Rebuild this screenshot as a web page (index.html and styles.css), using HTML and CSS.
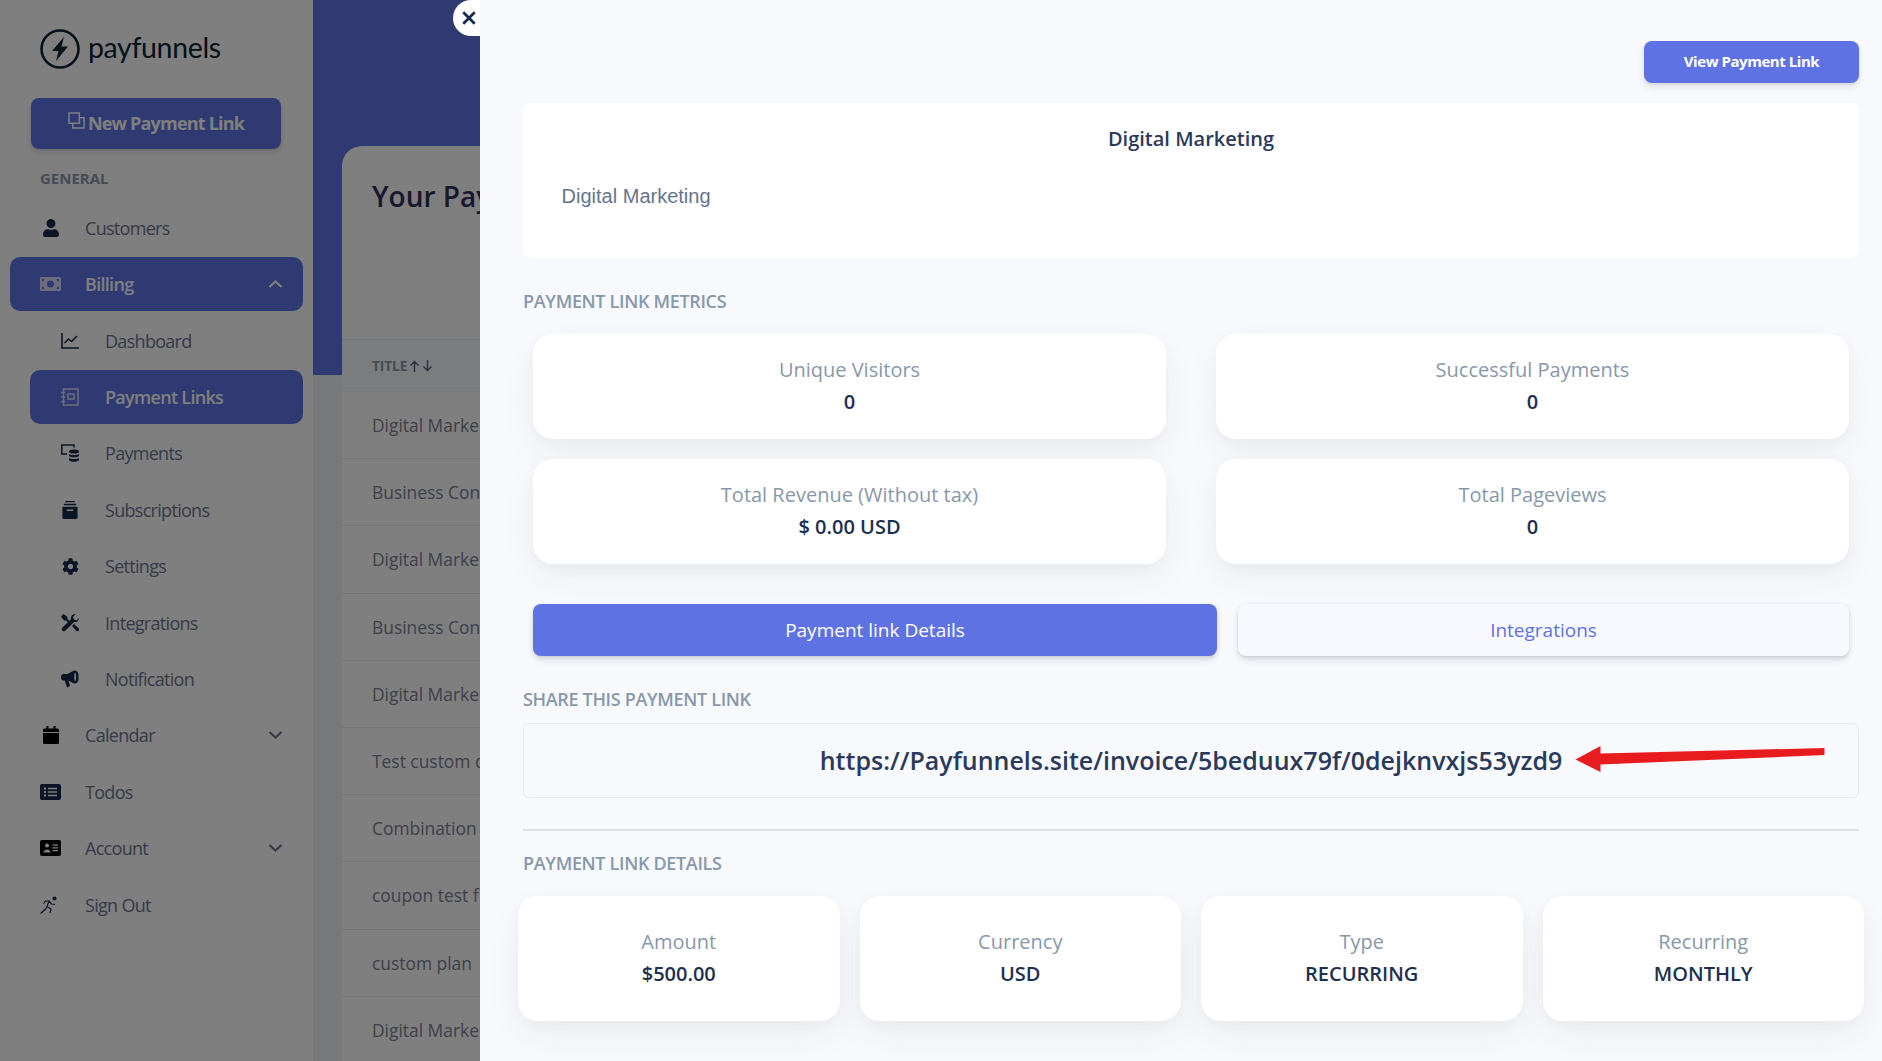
FILE: index.html
```html
<!DOCTYPE html>
<html lang="en">
<head>
<meta charset="utf-8">
<title>Payment Links</title>
<link rel="stylesheet" href="styles.css">
</head>
<body>
<div class="app">
  <aside class="sidebar">
    <div class="logo">
      <svg class="logo-mark" viewBox="0 0 40 40"><circle cx="20" cy="20" r="18.5" fill="none" stroke="#0b2233" stroke-width="2.6"/><path d="M24 8 L12 22 H18.5 L16 32 L28 17.5 H21.5 Z" fill="#0b2233"/></svg>
      <span class="logo-text">payfunnels</span>
    </div>
    <button class="new-btn"><svg class="new-icon" viewBox="0 0 18 18"><path d="M1 1h11v11H1zM5 12v5h12V6h-5" fill="none" stroke="currentColor" stroke-width="1.6"/></svg><span>New Payment Link</span></button>
    <div class="side-heading">GENERAL</div>
    <nav class="nav">
      <a class="item"><span class="ico"><svg class="i16" viewBox="0 0 448 512"><path d="M224 256c70.7 0 128-57.3 128-128S294.7 0 224 0 96 57.3 96 128s57.3 128 128 128zm89.6 32h-16.7c-22.2 10.2-46.9 16-72.9 16s-50.6-5.8-72.9-16h-16.7C60.2 288 0 348.2 0 422.4V464c0 26.5 21.5 48 48 48h352c26.5 0 48-21.5 48-48v-41.6c0-74.2-60.2-134.4-134.4-134.4z"/></svg></span>Customers</a>
      <a class="item active"><span class="ico"><svg class="i21" viewBox="0 0 21 14"><path fill-rule="evenodd" d="M1.5 0h18A1.5 1.5 0 0 1 21 1.500v11a1.500 1.500 0 0 1-1.500 1.500h-18A1.500 1.500 0 0 1 0 12.500v-11A1.500 1.500 0 0 1 1.500 0zM10.500 3.500a3.500 3.500 0 1 0 0 7 3.500 3.500 0 0 0 0-7zM2 2v2.500A2.500 2.500 0 0 0 4.500 2zM19 2h-2.500A2.500 2.500 0 0 0 19 4.500zM2 12h2.500A2.500 2.500 0 0 0 2 9.500zM19 12V9.500A2.500 2.500 0 0 0 16.500 12z"/></svg></span>Billing<svg class="chev" viewBox="0 0 14 8"><path d="M1 7l6-5.500L13 7" fill="none" stroke="currentColor" stroke-width="2.200"/></svg></a>
      <a class="item sub"><span class="ico"><svg class="i18" viewBox="0 0 18 16"><path d="M1 0v15h17" fill="none" stroke="currentColor" stroke-width="1.600"/><path d="M3.500 10l4-4 3 2.500L16 3" fill="none" stroke="currentColor" stroke-width="1.600"/></svg></span>Dashboard</a>
      <a class="item sub active"><span class="ico"><svg class="i18" viewBox="0 0 18 18"><path d="M2.500 1h14.500v16H2.500z" fill="none" stroke="currentColor" stroke-width="1.500"/><path d="M7 6h6v5H7z" fill="none" stroke="currentColor" stroke-width="1.500"/><path d="M0 4.500h4M0 9h4M0 13.500h4" stroke="currentColor" stroke-width="1.500"/></svg></span>Payment Links</a>
      <a class="item sub"><span class="ico"><svg class="i18" viewBox="0 0 18 18"><path d="M6 10H.8V1H13v2.500" fill="none" stroke="currentColor" stroke-width="1.500"/><ellipse cx="13" cy="7.500" rx="5" ry="2"/><path d="M8 10c1 1.300 9 1.300 10 0v2c-1 1.800-9 1.800-10 0zM8 14c1 1.300 9 1.300 10 0v2c-1 2.400-9 2.400-10 0z"/></svg></span>Payments</a>
      <a class="item sub"><span class="ico"><svg class="i18" viewBox="0 0 16 19"><path fill-rule="evenodd" d="M3 0h10v1.300H3zM1.500 3h13v1.500h-13zM0 6h16v11.500a1.500 1.500 0 0 1-1.500 1.500h-13A1.500 1.500 0 0 1 0 17.500zM4.500 9v1.500h7V9z"/></svg></span>Subscriptions</a>
      <a class="item sub"><span class="ico"><svg class="cog" viewBox="0 0 512 512"><path d="M487.400 315.700l-42.600-24.600c4.300-23.200 4.300-47 0-70.200l42.600-24.600c4.900-2.800 7.100-8.600 5.500-14-11.100-35.600-30-67.800-54.700-94.600-3.800-4.100-10-5.100-14.800-2.300L380.800 110c-17.900-15.400-38.500-27.300-60.800-35.100V25.800c0-5.600-3.900-10.500-9.400-11.700-36.700-8.200-74.300-7.800-109.200 0-5.500 1.200-9.400 6.100-9.400 11.700V75c-22.200 7.900-42.800 19.800-60.800 35.100L88.700 85.500c-4.900-2.800-11-1.900-14.800 2.300-24.700 26.700-43.600 58.900-54.700 94.600-1.700 5.400.6 11.200 5.500 14L67.300 221c-4.300 23.200-4.300 47 0 70.200l-42.600 24.600c-4.900 2.800-7.100 8.600-5.500 14 11.100 35.600 30 67.800 54.700 94.600 3.800 4.100 10 5.100 14.800 2.300l42.600-24.600c17.900 15.400 38.500 27.300 60.800 35.100v49.200c0 5.600 3.900 10.500 9.400 11.700 36.700 8.200 74.300 7.800 109.200 0 5.500-1.200 9.400-6.100 9.400-11.700v-49.200c22.200-7.900 42.800-19.800 60.800-35.100l42.600 24.600c4.900 2.800 11 1.900 14.800-2.300 24.700-26.700 43.600-58.900 54.700-94.600 1.500-5.500-.7-11.300-5.600-14.100zM256 336c-44.100 0-80-35.900-80-80s35.900-80 80-80 80 35.900 80 80-35.900 80-80 80z"/></svg></span>Settings</a>
      <a class="item sub"><span class="ico"><svg class="i18" viewBox="0 0 18 18"><path d="M2.500 0L0 2.500l3 4h2l3 3 1.500-1.500-3-3v-2zM14 0a4 4 0 0 0-3.900 5L1 14a2.200 2.200 0 0 0 3 3l9-9.100A4 4 0 0 0 18 4l-2.500 2.400L13 5.500 12 3l2.500-2.700zM11 12l4.500 5a1.800 1.800 0 0 0 2.400-2.400L13 10z"/></svg></span>Integrations</a>
      <a class="item sub"><span class="ico"><svg class="i18" viewBox="0 0 18 17"><path fill-rule="evenodd" d="M0 6.500a3 3 0 0 1 3-3h3.500L13 0c1.500 0 3 .5 3.500 1.500C18 3 18 10 16.500 11.500c-.5 1-2 1.500-3.500 1.500L7.500 10l1.500 5.500-3 1.500-2.300-7A3 3 0 0 1 0 6.500zM14 2c-1 2-1 7 0 9 1.500-1 1.500-8 0-9z"/></svg></span>Notification</a>
      <a class="item"><span class="ico"><svg class="i16 black" viewBox="0 0 16 18"><path d="M0 7h16v9.500a1.500 1.500 0 0 1-1.500 1.500h-13A1.500 1.500 0 0 1 0 16.500zM1.500 2.500H3.500V0h2v2.500h5V0h2v2.500h2A1.500 1.500 0 0 1 16 4v2H0V4a1.500 1.500 0 0 1 1.500-1.500z"/></svg></span>Calendar<svg class="chev" viewBox="0 0 14 8"><path d="M1 1l6 5.500L13 1" fill="none" stroke="currentColor" stroke-width="2.200"/></svg></a>
      <a class="item"><span class="ico"><svg class="i21" viewBox="0 0 21 16"><path fill-rule="evenodd" d="M2 0h17a2 2 0 0 1 2 2v12a2 2 0 0 1-2 2H2a2 2 0 0 1-2-2V2a2 2 0 0 1 2-2zM4 3.500v2h2v-2zM4 7v2h2V7zM4 10.500v2h2v-2zM8 3.800v1.500h9V3.800zM8 7.300v1.500h9V7.300zM8 10.800v1.500h9v-1.500z"/></svg></span>Todos</a>
      <a class="item"><span class="ico"><svg class="i21 black" viewBox="0 0 21 16"><path fill-rule="evenodd" d="M2 0h17a2 2 0 0 1 2 2v12a2 2 0 0 1-2 2H2a2 2 0 0 1-2-2V2a2 2 0 0 1 2-2zM7 3.500a2 2 0 1 0 0 4 2 2 0 0 0 0-4zM3.500 12.500h7c0-4-7-4-7 0zM12.500 4.500v1.200H18V4.500zM12.500 7.300v1.200H18V7.300zM12.500 10v1.200H18V10z"/></svg></span>Account<svg class="chev" viewBox="0 0 14 8"><path d="M1 1l6 5.500L13 1" fill="none" stroke="currentColor" stroke-width="2.200"/></svg></a>
      <a class="item"><span class="ico"><svg class="i18" viewBox="0 0 18 18"><circle cx="14.500" cy="2.500" r="2"/><path d="M.5 17.500l5-4.500 1.500-2.500L11 13l-1 4M7 10.500l2-5.500H5.500L3.500 7.500M9 5l2.500 3 3.500.5" fill="none" stroke="currentColor" stroke-width="1.200"/></svg></span>Sign Out</a>
    </nav>
  </aside>
  <main class="main">
    <div class="hero"></div>
    <section class="list-card">
      <h2 class="list-title">Your Pay</h2>
      <div class="list-head"><span class="th">TITLE</span><svg class="sort" viewBox="0 0 24 12"><path d="M5.500 12V1.500M1.500 5.500l4-4 4 4M18.500 0v10.500M14.500 6.500l4 4 4-4" fill="none" stroke="currentColor" stroke-width="1.400"/></svg></div>
      <div class="row">Digital Marke</div>
      <div class="row">Business Con</div>
      <div class="row">Digital Marke</div>
      <div class="row">Business Con</div>
      <div class="row">Digital Marke</div>
      <div class="row">Test custom d</div>
      <div class="row">Combination</div>
      <div class="row">coupon test f</div>
      <div class="row">custom plan</div>
      <div class="row">Digital Marke</div>
    </section>
  </main>
</div>
<div class="overlay"></div>
<section class="panel">
  <button class="close"><svg viewBox="0 0 14 14"><path d="M2 2l10 10M12 2L2 12" stroke="#172b4d" stroke-width="2.400" fill="none"/></svg></button>
  <div class="panel-top"><a class="view-btn">View Payment Link</a></div>
  <div class="intro">
    <h3 class="intro-title">Digital Marketing</h3>
    <p class="intro-text">Digital Marketing</p>
  </div>
  <h6 class="section first">PAYMENT LINK METRICS</h6>
  <div class="metrics">
    <div class="stat"><span class="stat-label">Unique Visitors</span><strong class="stat-value">0</strong></div>
    <div class="stat"><span class="stat-label">Successful Payments</span><strong class="stat-value">0</strong></div>
    <div class="stat"><span class="stat-label">Total Revenue (Without tax)</span><strong class="stat-value">$ 0.00 USD</strong></div>
    <div class="stat"><span class="stat-label">Total Pageviews</span><strong class="stat-value">0</strong></div>
  </div>
  <div class="tabs">
    <a class="tab on">Payment link Details</a>
    <a class="tab off">Integrations</a>
  </div>
  <h6 class="section share">SHARE THIS PAYMENT LINK</h6>
  <div class="link-box">
    <span class="link-url">https://Payfunnels.site/invoice/5beduux79f/0dejknvxjs53yzd9</span>
    <svg class="arrow" viewBox="0 0 250 26"><path d="M0 13.500L25 0V7.500L249 2V9L25 18.500V26Z" fill="#e81c1f"/></svg>
  </div>
  <hr class="rule">
  <h6 class="section details">PAYMENT LINK DETAILS</h6>
  <div class="detail-grid">
    <div class="stat tall"><span class="stat-label">Amount</span><strong class="stat-value">$500.00</strong></div>
    <div class="stat tall"><span class="stat-label">Currency</span><strong class="stat-value">USD</strong></div>
    <div class="stat tall"><span class="stat-label">Type</span><strong class="stat-value">RECURRING</strong></div>
    <div class="stat tall"><span class="stat-label">Recurring</span><strong class="stat-value">MONTHLY</strong></div>
  </div>
</section>
</body>
</html>
```

FILE: styles.css
```css
* { box-sizing: border-box; }
html, body { margin: 0; height: 100%; overflow: hidden; }
body { font-family: "Open Sans", "Liberation Sans", sans-serif; color: #525f7f; background: #f4f5f7; }
h2, h3, h6, p { margin: 0; }
svg { display: block; fill: currentColor; }

.app { display: flex; height: 1061px; }

.sidebar { width: 313px; flex: none; background: #fff; padding: 0 10px; }
.logo { display: flex; align-items: center; gap: 8px; height: 98px; padding: 0 0 0 30px; }
.logo-mark { width: 40px; height: 40px; }
.logo-text { font-family: "Lato", sans-serif; font-size: 28.500px; color: #0b2233; letter-spacing: -.35px; line-height: 40px; margin-top: -4px; }
.new-btn { display: flex; align-items: center; justify-content: center; gap: 3px; width: 250px; height: 51px; margin-left: 21px; padding: 0 0 2px; border: 0; border-radius: 8px; background: #5e72e4; color: #fff; font: 700 18px "Open Sans", sans-serif; letter-spacing: -.8px; box-shadow: 0 4px 6px rgba(50,50,93,.11), 0 1px 3px rgba(0,0,0,.08); }
.new-icon { width: 17px; height: 17px; margin-top: -5px; }
.side-heading { margin: 19.500px 0 0 30px; height: 32.400px; font-size: 15px; line-height: 19px; font-weight: 700; color: #8898aa; }

.nav { display: flex; flex-direction: column; gap: 2.400px; }
.item { display: flex; align-items: center; height: 54px; padding-left: 30px; border-radius: 10px; font-size: 18px; letter-spacing: -.7px; color: #6b7690; position: relative; }
.item.sub { margin-left: 20px; padding-left: 31px; }
.item.active { background: #5e72e4; color: #fff; font-weight: 600; }
.ico { width: 45px; flex: none; color: #172b4d; display: flex; }
.sub .ico { width: 44px; }
.active .ico { color: #fff; opacity: .75; }
.i16 { width: 16px; height: 18px; margin-left: 3px; }
.cog { width: 17px; height: 17px; margin-left: 1px; }
.i18 { width: 18px; height: 18px; }
.i21 { width: 21px; height: 16px; }
.black { color: #000; }
.chev { position: absolute; left: 258px; width: 15px; height: 8px; color: #6b7690; }
.active .chev { color: #fff; }

.main { flex: 1; position: relative; background: #f1f3f7; min-width: 0; overflow: hidden; }
.hero { height: 375px; background: #5e72e4; }
.list-card { margin: -229px 0 0 29px; background: #fff; border-radius: 20px 0 0 0; position: relative; height: 960px; }
.list-title { height: 193px; padding: 31px 0 0 30px; font-size: 28px; line-height: 38px; font-weight: 600; color: #32325d; white-space: nowrap; }
.list-head { display: flex; align-items: center; height: 53px; padding-left: 30px; background: #f6f9fc; border: 1px solid #e9ecef; border-width: 1px 0; color: #8898aa; font-size: 13.500px; font-weight: 700; }
.sort { width: 24px; height: 12px; margin-left: 2px; color: #525f7f; }
.row { height: 67.200px; line-height: 67px; padding-left: 30px; font-size: 17.400px; color: #7a8296; border-bottom: 1px solid #e9ecef; white-space: nowrap; }

.overlay { position: absolute; inset: 0; background: rgba(0,0,0,.5); }

.panel { position: absolute; left: 480px; top: 0; right: 0; height: 1061px; overflow: hidden; padding: 41px 23px 0 43px; background: #f8f9fc; }
.close { position: fixed; left: 453px; top: 0; width: 27px; height: 36px; padding: 0; border: 0; background: #fff; border-radius: 18px 0 0 18px; display: flex; align-items: center; justify-content: center; }
.close svg { width: 16px; height: 16px; margin-left: 4px; }

.panel-top { display: flex; justify-content: flex-end; }
.view-btn { display: flex; align-items: center; justify-content: center; width: 215px; height: 42px; padding-bottom: 2px; margin-bottom: 1px; background: #5e72e4; color: #fff; border-radius: 8px; font-size: 15px; font-weight: 700; letter-spacing: -.45px; box-shadow: 0 4px 6px rgba(50,50,93,.11), 0 1px 3px rgba(0,0,0,.08); }
.intro { margin-top: 19px; height: 155px; background: #fff; border-radius: 8px; padding: 22px 38.600px 0; }
.intro-title { text-align: center; font-size: 20px; line-height: 27px; font-weight: 600; color: #2b3a5a; }
.intro-text { margin-top: 31px; font-family: "Liberation Sans", Arial, sans-serif; font-size: 20px; line-height: 27px; color: #67748e; }

.section { font-size: 18px; line-height: 22px; font-weight: 600; color: #8898aa; letter-spacing: -.33px; }
.section.first { margin-top: 32px; }
.section.share { margin-top: 32px; }
.section.details { margin-top: 21px; }

.metrics { display: grid; grid-template-columns: 1fr 1fr; gap: 20.500px 50px; margin: 22px 10px 0; }
.stat { display: flex; flex-direction: column; align-items: center; justify-content: center; gap: 5px; height: 104.500px; padding-bottom: 2px; background: #fff; border-radius: 20px; box-shadow: 0 15px 35px rgba(50,50,93,.05), 0 5px 15px rgba(0,0,0,.03); }
.stat-label { font-size: 20px; line-height: 27px; color: #8898aa; }
.stat-value { font-size: 20px; line-height: 27px; font-weight: 600; color: #1e3050; }

.tabs { display: flex; gap: 21px; margin: 40.500px 10px 0; }
.tab { display: flex; align-items: center; justify-content: center; height: 52px; font-size: 19px; border-radius: 8px; padding-bottom: 1px; box-shadow: 0 4px 6px rgba(50,50,93,.14), 0 1px 3px rgba(0,0,0,.1); }
.tab.on { width: 684px; flex: none; background: #5e72e4; color: #fff; }
.tab.off { flex: 1; background: #f8f9fe; color: #5e72e4; }

.link-box { position: relative; display: flex; align-items: center; justify-content: center; height: 75px; margin-top: 12.500px; border: 1px solid #e9ecef; border-radius: 6px; }
.link-url { font-size: 25px; line-height: 36px; font-weight: 600; color: #2b3a5a; white-space: nowrap; }
.arrow { position: absolute; left: 1051px; top: 22px; width: 251px; height: 26px; }

.rule { height: 2px; margin: 31.500px 0 0; border: 0; background: #dee2e6; }

.detail-grid { display: grid; grid-template-columns: repeat(4, 1fr); gap: 20px; margin: 22px -5px 0; }
.tall { height: 125px; }
```
